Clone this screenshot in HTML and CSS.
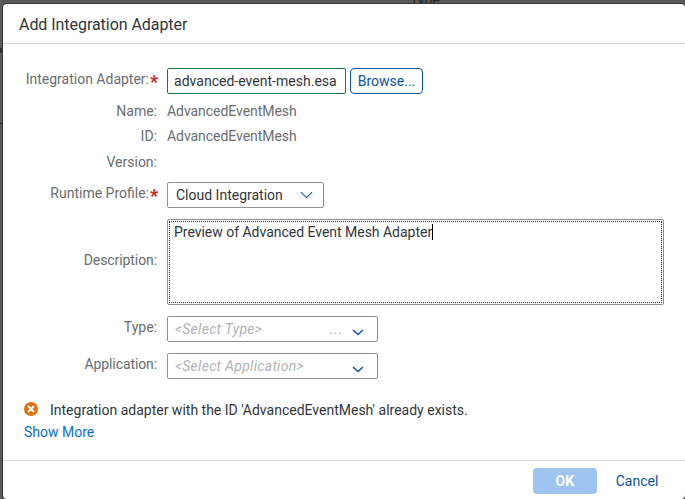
FILE: index.html
```
<!DOCTYPE html>
<html lang="en">
<head>
<meta charset="utf-8">
<title>Add Integration Adapter</title>
<link rel="stylesheet" href="styles.css">
</head>
<body>
<div class="backdrop"><span class="behind-type">Type</span><i class="edge-mark"></i><i class="edge-line"></i></div>
<main class="dialog">
  <header class="header"><h1>Add Integration Adapter</h1></header>
  <section class="content">
    <div class="form">
      <div class="label raised"><span>Integration Adapter:</span><b class="required">*</b></div>
      <div class="field"><div class="input file"><span>advanced-event-mesh.esa</span></div><button class="browse">Browse...</button></div>
      <div class="label"><span>Name:</span></div><div class="value">AdvancedEventMesh</div>
      <div class="label"><span>ID:</span></div><div class="value">AdvancedEventMesh</div>
      <div class="label version"><span>Version:</span></div><div></div>
      <div class="label raised"><span>Runtime Profile:</span><b class="required">*</b></div>
      <div class="field"><div class="input profile"><span>Cloud Integration</span><svg class="chevron" viewBox="0 0 14 8"><path d="M1 1l6 5.8L13 1"/></svg></div></div>
      <div class="label description-label"><span>Description:</span></div>
      <div class="textarea"><div class="focus"><span>Preview of Advanced Event Mesh Adapter</span><i class="caret"></i></div></div>
      <div class="label raised"><span>Type:</span></div>
      <div class="field"><div class="input combo"><em>&lt;Select Type&gt;</em><span class="dots">...</span><svg class="chevron small" viewBox="0 0 12 7"><path d="M1 1l5 4.5L11 1"/></svg></div></div>
      <div class="label raised application"><span>Application:</span></div>
      <div class="field"><div class="input combo"><em>&lt;Select Application&gt;</em><svg class="chevron small" viewBox="0 0 12 7"><path d="M1 1l5 4.5L11 1"/></svg></div></div>
    </div>
    <div class="message"><svg class="error" viewBox="0 0 14 14"><circle cx="7" cy="7" r="7"/><path d="M4 4l6 6M10 4l-6 6"/></svg><span>Integration adapter with the ID 'AdvancedEventMesh' already exists.</span></div>
    <a class="more">Show More</a>
  </section>
  <footer class="footer"><button class="ok">OK</button><button class="cancel">Cancel</button></footer>
</main>
</body>
</html>
```
FILE: styles.css
```
* { box-sizing: border-box; }
body { margin: 0; width: 685px; height: 499px; overflow: hidden; background: #595959; color: #32363a; font: 14px/20px Roboto, "Liberation Sans", sans-serif; padding: 4px 0 0 3px; }
button { font: inherit; padding: 0; margin: 0; }
span, em { white-space: nowrap; }
.backdrop { position: absolute; inset: 0; overflow: hidden; }
.behind-type { position: absolute; left: 410px; top: -8px; color: #222; font-size: 14px; line-height: 16px; }
.edge-mark { position: absolute; left: 0; top: 48px; width: 2px; height: 5px; background: #303030; }
.edge-line { position: absolute; left: 0; top: 123px; width: 3px; height: 1px; background: #222; }
.dialog { position: relative; width: 682px; height: 495px; background: #fff; border-radius: 4px; box-shadow: 0 0 0 1px #383838; display: flex; flex-direction: column; }
.header { height: 40px; flex: none; border-bottom: 1px solid #d5d9d9; box-shadow: 0 2px 3px #0000000a; padding: 11px 16px; }
h1 { font-size: 16px; line-height: 20px; font-weight: 400; letter-spacing: -.05px; margin: 0; }
.content { height: 416px; flex: none; padding: 24px 21px 0; }
.form { display: grid; grid-template-columns: 133px 497px; column-gap: 10px; grid-template-rows: 31px 25px 25px 33px 37px 97px 37px 26px; }
.label { display: flex; justify-content: flex-end; color: #6a6d70; padding-top: 2px; }
.label.raised { padding-top: 1px; }
.label.version { padding-top: 3px; }
.label.description-label { padding-top: 31px; letter-spacing: -.08px; }
.application { letter-spacing: -.1px; }
.required { color: #c22; width: 9px; margin-right: -1px; font-size: 18px; line-height: 25px; padding-left: 1px; }
.value { color: #6a6d70; padding-top: 2px; letter-spacing: -.05px; }
.field { display: flex; gap: 4px; }
.input { height: 26px; border: 1px solid #89919a; border-radius: 2px; display: flex; align-items: center; background: #fff; padding: 0 7px; }
.file { width: 179px; border-color: #107e3e; padding-left: 6px; letter-spacing: .02px; }
.browse { width: 73px; height: 26px; background: #fff; border: 1px solid #0854a0; border-radius: 4px; color: #0854a0; }
.profile { width: 157px; padding-left: 8px; justify-content: space-between; padding-right: 10px; }
.combo { width: 211px; color: #b0b2b4; padding-right: 13px; }
.combo em { letter-spacing: .3px; }
.chevron { width: 13px; height: 8px; flex: none; fill: none; stroke: #0854a0; stroke-width: 1.1; }
.chevron.small { width: 12px; height: 7px; margin: 6px 0 0 auto; stroke-width: 1.4; }
.dots { margin-left: auto; letter-spacing: 1px; }
.dots + .chevron.small { margin-left: 9px; }
.textarea { height: 86px; border: 1px solid #89919a; border-radius: 2px; padding: 1px; }
.focus { height: 82px; border: 1px dotted #333; padding: 0 0 0 4px; display: flex; letter-spacing: -.02px; }
.caret { width: 1px; height: 16px; background: #000; margin-top: 2px; }
.message { display: flex; align-items: center; height: 20px; margin-top: 21px; gap: 12px; }
.error { position: relative; top: -1px; width: 14px; height: 14px; flex: none; }
.error circle { fill: #e0700c; }
.error path { stroke: #fff; stroke-width: 2; }
.more { display: block; margin-top: 2px; color: #0a6ed1; }
.footer { height: 39px; border-top: 1px solid #d9d9d9; display: flex; justify-content: flex-end; padding: 7px 16px 0; gap: 8px; }
.ok, .cancel { height: 26px; border: 0; border-radius: 4px; }
.ok { width: 64px; color: #fff; background: #9dc5ef; font-weight: 700; letter-spacing: .3px; }
.cancel { width: 64px; color: #0854a0; background: transparent; }
```
